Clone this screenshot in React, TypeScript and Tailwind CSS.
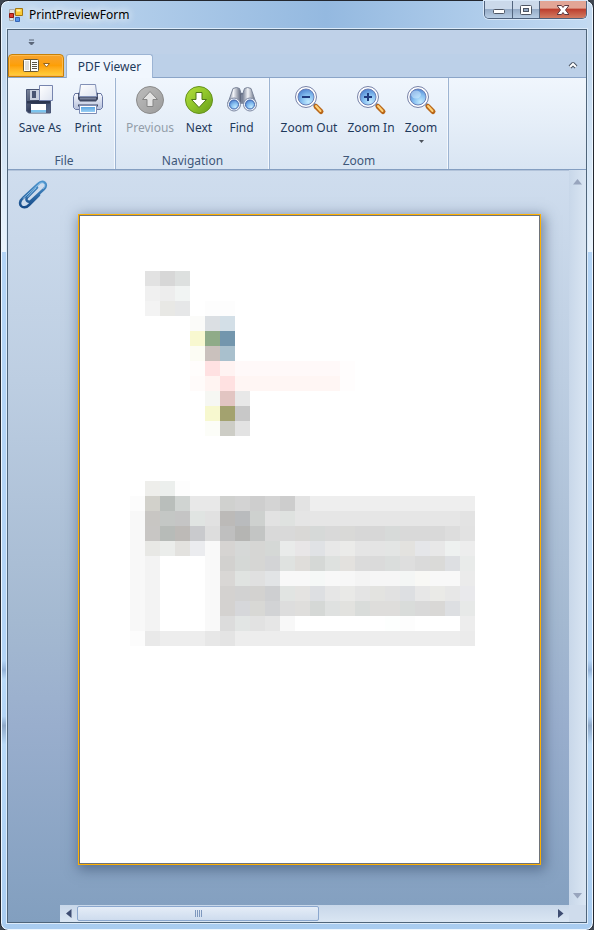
import type { ReactNode } from "react";

type MosaicRow = { row: number; col: number; colors: string };

// Six-digit hex colours, one per cell; "x3" repeats the colour before it to three cells.
const mosaic: MosaicRow[] = [
  { row: 0, col: 1, colors: "e2e2e2 d7d7d7 dde0df" },
  { row: 1, col: 1, colors: "f0f0f0 ededed f1f4f3" },
  { row: 2, col: 1, colors: "f3f3f3 e8e8e5 e6e7e8 ffffff fdfdfd x2" },
  { row: 3, col: 4, colors: "fbfbf9 dbdfe3 d3dfe7" },
  { row: 4, col: 4, colors: "f8f8d0 8fab88 7396ad" },
  { row: 5, col: 4, colors: "fcfcf4 cac1bd a9c0cd" },
  { row: 6, col: 4, colors: "fffdfc ffe1e2 fff3f2 fff9f9 x7 fffdfd" },
  { row: 7, col: 4, colors: "fffbfa fff4f2 ffe1e1 fff6f4 x7 fffdfd" },
  { row: 8, col: 5, colors: "f6f7f3 e2c5c2 e8e8e8" },
  { row: 9, col: 5, colors: "f7f8cf a3a26f c8c8c8" },
  { row: 10, col: 5, colors: "fcfdf8 cdcdc6 e3e3e3" },
  { row: 14, col: 1, colors: "eeeeeb ecefed fdfdfd" },
  { row: 15, col: 0, colors: "fcfcfc d2d1cb b9bebb d0d4d2 e8e8e8 x2 d0d1cf d3d3d3 cecece d4d4d4 cdcdcd e3e3e3 eeeeee x11" },
  { row: 16, col: 0, colors: "f8f8f8 c8c6c3 c4c7c5 c5c5c5 e0e4e2 e1e1e1 bcbab8 b9bbbd ced1cf e2e2e2 dfe2e0 e5e5e5 e6e6e6 x10 e3e3e3" },
  { row: 17, col: 0, colors: "f8f8f8 c8c6c4 b7bbb8 bdbab7 c9cacd dddddd bfbfbf b5b5b3 c3c5c4 d9d9d9 x2 d9d8d6 d6d9d8 d9d9d9 d9d9d7 d7d7d7 x2 d7dad9 d9d9d9 x3 dddddd e2e2e2" },
  { row: 18, col: 0, colors: "f8f8f8 e8e8e5 ebedeb e3e2df ebecef f9f9f9 d6d4d2 d6d8d7 d6d6d4 d5d8d6 e9ebea e8e6e7 e0e2e5 e8e8e8 ebebe9 e5e5e5 e4e4e4 e3e5e4 e3e2df e5e6e9 e8e8e8 eef1f0 ededed" },
  { row: 19, col: 0, colors: "f8f8f8 f3f3f3 ffffff x3 f9f9f9 d2d1cf d5d8d6 d6d6d4 d3d4d6 dfe2e0 dfddda d5d8d6 dee1df e3e1de dbdbdb dadada dadddc dedede dadada dadad8 dddfe2 e9ebea" },
  { row: 20, col: 0, colors: "f8f8f8 f3f3f3 ffffff x3 f9f9f9 d9d7d5 e0e3e1 e0e0e0 e2e4e6 f8f8f8 x2 f5f8f7 f8f8f8 f7f7f7 f4f4f4 f6f6f6 x2 f4f6f5 f8f8f5 f8f8f8 x2 ebebeb" },
  { row: 21, col: 0, colors: "f8f8f8 f3f3f3 ffffff x3 f9f9f9 d4d2d0 d2d2d2 d3d2d0 cecfd1 e1e4e2 e4e3e1 dddfe2 e6e6e6 e9e9e7 e4e4e4 e3e3e0 e1e1e1 dddfe2 e7e7e7 eaeae7 e7e7e7 e9e9ec" },
  { row: 22, col: 0, colors: "f8f8f8 f3f3f3 ffffff x3 f9f9f9 d4d2d0 d6d7da d8d8d5 d2d3d5 dddddd dfdedc d5d8d6 dfe1e0 e2e2df d9dcda dedddb x2 d9dcda d9d9d9 d9d8d6 dddfe2 e7e9e8" },
  { row: 23, col: 0, colors: "f8f8f8 f3f3f3 ffffff x3 f9f9f9 dcdcdc e2e5e4 e2e2e2 e6e6e6 f8f8f8 ffffff x6 fdfffe fdfdfd ffffff x3 ededed" },
  { row: 24, col: 0, colors: "fcfcfc e9e9e9 ededed x3 e7e7e7 e4e4e4 ededed x15 ebebeb" },
];

function expand(colors: string): string[] {
  const cells: string[] = [];
  for (const token of colors.split(" ")) {
    if (token[0] === "x") {
      const last = cells[cells.length - 1];
      for (let i = 1; i < Number(token.slice(1)); i++) cells.push(last);
    } else {
      cells.push("#" + token);
    }
  }
  return cells;
}

function PagePreview() {
  return (
    <svg viewBox="0 0 459 647" className="block w-full bg-white" shapeRendering="crispEdges" role="img" aria-label="Page">
      {mosaic.map(({ row, col, colors }) =>
        expand(colors).map((fill, i) => (
          <rect key={`${row}-${i}`} x={50 + (col + i) * 15} y={55 + row * 15} width="15" height="15" fill={fill} />
        )),
      )}
    </svg>
  );
}

function Defs() {
  return (
    <svg width="0" height="0" className="absolute" aria-hidden="true">
      <defs>
        <linearGradient id="navy" x1="0" y1="0" x2="1" y2="1">
          <stop offset="0" stopColor="#7d879d" />
          <stop offset="0.5" stopColor="#343f5d" />
          <stop offset="1" stopColor="#566688" />
        </linearGradient>
        <linearGradient id="paper" x1="0" y1="0" x2="1" y2="1">
          <stop offset="0" stopColor="#ffffff" />
          <stop offset="1" stopColor="#dde3f0" />
        </linearGradient>
        <linearGradient id="sky" x1="0" y1="0" x2="0" y2="1">
          <stop offset="0" stopColor="#5ba5e0" />
          <stop offset="1" stopColor="#9bd0f5" />
        </linearGradient>
        <linearGradient id="body" x1="0" y1="0" x2="0" y2="1">
          <stop offset="0" stopColor="#f8faff" />
          <stop offset="1" stopColor="#b4bfda" />
        </linearGradient>
        <linearGradient id="green" x1="0" y1="0" x2="1" y2="1">
          <stop offset="0" stopColor="#b4de3c" />
          <stop offset="0.5" stopColor="#8fc52a" />
          <stop offset="1" stopColor="#689c1b" />
        </linearGradient>
        <linearGradient id="grey" x1="0" y1="0" x2="1" y2="1">
          <stop offset="0" stopColor="#bdbdbd" />
          <stop offset="1" stopColor="#9b9b9b" />
        </linearGradient>
        <radialGradient id="lens" cx="0.65" cy="0.8" r="0.85">
          <stop offset="0" stopColor="#c3ebff" />
          <stop offset="0.5" stopColor="#86bff0" />
          <stop offset="1" stopColor="#4c80cf" />
        </radialGradient>
        <linearGradient id="tube" x1="0" y1="0" x2="1" y2="0">
          <stop offset="0" stopColor="#727c91" />
          <stop offset="0.4" stopColor="#f2f4f8" />
          <stop offset="1" stopColor="#4d576e" />
        </linearGradient>
        <linearGradient id="clip" x1="0" y1="0" x2="0" y2="1">
          <stop offset="0" stopColor="#4d94cd" />
          <stop offset="1" stopColor="#164a88" />
        </linearGradient>
      </defs>
    </svg>
  );
}

function Icon({ children }: { children: ReactNode }) {
  return (
    <svg width="32" height="32" viewBox="0 0 32 32" className="shrink-0" aria-hidden="true">
      {children}
    </svg>
  );
}

function SaveIcon() {
  return (
    <Icon>
      <path d="M2.500 5.500h24v23.500h-22l-2-2z" fill="url(#navy)" stroke="#4a5675" />
      <path d="M6 6h11v10H6z" fill="#c9d0df" />
      <path d="M8 7h4v7H8z" fill="#4a5573" />
      <path d="M3 17h23v2.500H3z" fill="#2c3650" />
      <path d="M7 20h15v8.500H7z" fill="#fff" />
      <path d="M7 26h15v2.500H7z" fill="#7cc4ee" />
      <path d="M15.500 1.500h13v15h-13z" fill="url(#paper)" stroke="#7785af" />
    </Icon>
  );
}

function PrintIcon() {
  return (
    <Icon>
      <path d="M3 9.500h4v6h18v-6h4l1.500 3v11l-2 2h-25l-2-2v-11z" fill="url(#body)" stroke="#6a78a4" />
      <path d="M6 9l2-1h16l2 1v6l-2 2.500H8L6 15z" fill="#3f4863" />
      <path d="M8 14.500h16" stroke="#78819a" strokeWidth="2" />
      <path d="M8.500.500h15l1.500 12H7z" fill="url(#paper)" stroke="#8290b6" />
      <path d="M6 21.500h20" stroke="#3f4967" strokeWidth="2" />
      <path d="M7.500 21.500h17v8h-17z" fill="#fff" stroke="#7d8cb4" />
      <path d="M9 23h14v5H9z" fill="url(#sky)" />
    </Icon>
  );
}

function PreviousIcon() {
  return (
    <Icon>
      <circle cx="16" cy="16" r="13.500" fill="url(#grey)" stroke="#8b8b8b" />
      <path d="M16 7.500l7.500 8H19v7h-6v-7H8.500z" fill="#e3e3e3" stroke="#858585" strokeLinejoin="round" />
    </Icon>
  );
}

function NextIcon() {
  return (
    <Icon>
      <circle cx="16" cy="16" r="13.500" fill="url(#green)" stroke="#64911c" />
      <path d="M16 23.500l-7.500-8H13v-7h6v7h4.500z" fill="#fff" stroke="#4e7519" strokeLinejoin="round" />
    </Icon>
  );
}

function FindIcon() {
  return (
    <Icon>
      <path d="M12 9h8v9h-8z" fill="#4b556b" />
      <path d="M7 4.500q3.500-2 6.500 0l2 6v9L2 19z" fill="url(#tube)" stroke="#7a8499" />
      <path d="M25 4.500q-3.500-2-6.500 0l-2 6v9L30 19z" fill="url(#tube)" stroke="#7a8499" />
      <circle cx="8" cy="20.500" r="6.500" fill="#e9eef7" stroke="#7e89a3" />
      <circle cx="24" cy="20.500" r="6.500" fill="#e9eef7" stroke="#7e89a3" />
      <circle cx="8" cy="20.500" r="4.500" fill="url(#lens)" stroke="#3f66ac" />
      <circle cx="24" cy="20.500" r="4.500" fill="url(#lens)" stroke="#3f66ac" />
    </Icon>
  );
}

function ZoomIcon({ sign }: { sign?: "in" | "out" }) {
  return (
    <Icon>
      <path d="M20 19l3.500 4" stroke="#7d879d" strokeWidth="3" />
      <path d="M23 22.500l5 5" stroke="#b96618" strokeWidth="5" strokeLinecap="round" />
      <path d="M23 22l4.500 5" stroke="#ffd279" strokeWidth="2" strokeLinecap="round" />
      <circle cx="13" cy="13" r="10.500" fill="#fff" stroke="#7882a8" />
      <circle cx="13" cy="13" r="8" fill="url(#lens)" stroke="#6a80b8" />
      {!sign && <ellipse cx="11" cy="10.500" rx="5" ry="4" fill="#d9f0ff" opacity="0.5" />}
      {sign && <path d="M9 13h8" stroke="#203a7e" strokeWidth="2" />}
      {sign === "in" && <path d="M13 9v8" stroke="#203a7e" strokeWidth="2" />}
    </Icon>
  );
}

function Tool({ label, icon, width, disabled, menu }: { label: string; icon: ReactNode; width: string; disabled?: boolean; menu?: boolean }) {
  return (
    <button type="button" disabled={disabled} className={`flex flex-col items-center whitespace-nowrap text-[#1e395b] disabled:text-[#939da9] ${width}`}>
      {icon}
      <span className="mt-1 leading-4">{label}</span>
      {menu && (
        <svg width="5" height="3" viewBox="0 0 5 3" className="mt-1" aria-hidden="true">
          <path d="M0 0h5L2.500 3z" fill="#4c535c" />
        </svg>
      )}
    </button>
  );
}

function Group({ name, padding, children }: { name: string; padding: string; children: ReactNode }) {
  return (
    <section className={`flex flex-col justify-between border-r border-[#9db4d2] pt-1.5 shadow-[inset_-1px_0_#f4f8fd] ${padding}`} aria-label={name}>
      <div className="flex items-start">{children}</div>
      <h2 className="text-center leading-4 text-[#3e5779]">{name}</h2>
    </section>
  );
}

function Ribbon() {
  return (
    <header>
      <div className="flex h-6 items-center bg-[#bfd1e8] pl-5">
        <button type="button" aria-label="Customize toolbar">
          <svg width="7" height="7" viewBox="0 0 7 7" aria-hidden="true">
            <path d="M1 1h5M1 3.500h5L3.500 6z" stroke="#5a6678" fill="#5a6678" />
          </svg>
        </button>
      </div>
      <div className="flex h-6 items-end border-b border-[#8ba5c8] bg-[#bcd0e8]">
        <button type="button" aria-label="File menu" className="flex h-[23px] w-14 items-center justify-center gap-1 rounded-t-sm border border-[#c78006] bg-linear-to-b from-[#f6a32b] via-[#fd9f05] to-[#ffd23d] shadow-[inset_0_0_0_1px_#ffba4c]">
          <svg width="16" height="13" viewBox="0 0 16 13" aria-hidden="true">
            <rect x="0.500" y="0.500" width="15" height="12" rx="1" fill="#fff" stroke="#6b5a35" />
            <path d="M7.500 1v11" stroke="#6b5a35" />
            <path d="M2 2h4v9H2z" fill="#dedede" />
            <path d="M9 3.500h5M9 5.500h5M9 7.500h5M9 9.500h5" stroke="#5b5447" />
          </svg>
          <svg width="7" height="5" viewBox="0 0 7 5" aria-hidden="true">
            <path d="M.500.500h6L3.500 4z" fill="#fff" stroke="#95631b" />
          </svg>
        </button>
        <button type="button" className="-mb-px ml-0.5 h-6 w-[87px] rounded-t-[3px] border border-b-0 border-[#9cb4d4] bg-[#f1f7fe] leading-4 text-[#1e395b]">
          PDF Viewer
        </button>
        <button type="button" aria-label="Collapse ribbon" className="mr-2 mb-2 ml-auto">
          <svg width="10" height="8" viewBox="0 0 10 8" aria-hidden="true">
            <path d="M2 6L5 3l3 3" fill="none" stroke="#454f5e" strokeWidth="4" strokeLinejoin="round" />
            <path d="M2 6l3-3 3 3" fill="none" stroke="#fff" strokeWidth="2" />
          </svg>
        </button>
      </div>
      <div className="flex h-23 border-b border-[#849ec1] bg-linear-to-b from-[#f0f6fd] via-[#e5eef8] to-[#d9e5f3]">
        <Group name="File" padding="pl-2 pr-[3px]">
          <Tool label="Save As" icon={<SaveIcon />} width="w-12" />
          <Tool label="Print" icon={<PrintIcon />} width="w-12" />
        </Group>
        <Group name="Navigation" padding="px-1.5">
          <Tool label="Previous" icon={<PreviousIcon />} width="w-14" disabled />
          <Tool label="Next" icon={<NextIcon />} width="w-[42px]" />
          <Tool label="Find" icon={<FindIcon />} width="w-[43px]" />
        </Group>
        <Group name="Zoom" padding="px-1.5">
          <Tool label="Zoom Out" icon={<ZoomIcon sign="out" />} width="w-[66px]" />
          <Tool label="Zoom In" icon={<ZoomIcon sign="in" />} width="w-[58px]" />
          <Tool label="Zoom" icon={<ZoomIcon />} width="w-[42px]" menu />
        </Group>
      </div>
    </header>
  );
}

function TitleBar() {
  return (
    <div className="flex h-[27px] items-start justify-between bg-linear-to-r from-[#c4daf0] via-[#94b9e0] via-55% to-[#c2daf2] bg-clip-content pr-px pl-[3px]">
      <div className="flex items-center gap-1.5 pt-[5px]">
        <svg width="14" height="14" viewBox="0 0 14 14" aria-hidden="true">
          <path d="M.500 1.500h5v5h-5zM.500 8.500h4v4h-4z" fill="#e3e3e3" stroke="#aaa" />
          <path d="M6.500.500h7v7h-7z" fill="#f9ca35" stroke="#a47610" />
          <path d="M7.500 1.500h4v2h-4z" fill="#fff0a8" />
          <path d="M.500 5.500h4v4h-4z" fill="#dc3b31" stroke="#8a1610" />
          <path d="M6.500 9.500h4v4h-4z" fill="#5794e8" stroke="#3565b7" />
        </svg>
        <h1 className="leading-[17px] text-black [text-shadow:0_0_8px_#fff,0_0_8px_#fff]">PrintPreviewForm</h1>
      </div>
      <div className="flex h-[18px] overflow-hidden rounded-b-[5px] border border-t-0 border-[#4f627d] shadow-[0_0_0_1px_#d9e8f8]">
        <button type="button" aria-label="Minimize" className="flex w-7 items-center justify-center border-r border-[#53657e] bg-linear-to-b from-[#cbd9ea] from-45% via-[#96acc7] via-50% to-[#b8cde4]">
          <svg width="12" height="6" viewBox="0 0 12 6" className="mt-1" aria-hidden="true">
            <rect x="0.500" y="0.500" width="11" height="4" rx="1" fill="#fff" stroke="#4e5664" />
          </svg>
        </button>
        <button type="button" aria-label="Maximize" className="flex w-[27px] items-center justify-center border-r border-[#53657e] bg-linear-to-b from-[#cbd9ea] from-45% via-[#96acc7] via-50% to-[#b8cde4]">
          <svg width="12" height="10" viewBox="0 0 12 10" aria-hidden="true">
            <rect x="0.500" y="0.500" width="11" height="9" rx="1" fill="#fff" stroke="#4e5664" />
            <rect x="3.500" y="3.500" width="5" height="3" fill="#91a7c2" stroke="#4e5664" />
          </svg>
        </button>
        <button type="button" aria-label="Close" className="flex w-[46px] items-center justify-center bg-linear-to-b from-[#e2a596] from-40% via-[#bd4030] via-50% to-[#d27b62]">
          <svg width="12" height="10" viewBox="0 0 12 10" aria-hidden="true">
            <path d="M0 .500h4.500L6 2.500 7.500.500H12L8.500 5 12 9.500H7.500L6 7.500l-1.500 2H0L3.500 5z" fill="#fff" stroke="#5e3940" />
          </svg>
        </button>
      </div>
    </div>
  );
}

function Paperclip() {
  return (
    <svg width="32" height="32" viewBox="0 0 32 32" fill="none" aria-hidden="true">
      <g strokeLinecap="round" strokeLinejoin="round">
        <path d="M19 8.500L9.500 18c-3 3 1 6.500 4 3.500L26 10c5-5-1-10-6-5L5 19c-7 6 0 13 6 7l10-10" stroke="url(#clip)" strokeWidth="2.500" />
        <path d="M18 9l-8.500 9M25.500 9.500c4-4-1-8-5-4L5 19.500" stroke="#a2d1f1" strokeWidth="0.800" />
      </g>
    </svg>
  );
}

function Viewer() {
  return (
    <main className="flex flex-1 bg-[linear-gradient(#cfddee,#bdcee2_28%,#a4b9d1_60%,#99aecd_74%,#829fbf)] shadow-[inset_0_1px_#b2c3da]">
      <aside className="w-[52px] shrink-0 pt-[9px] pl-2.5">
        <button type="button" aria-label="Attachments">
          <Paperclip />
        </button>
      </aside>
      <div className="flex min-w-0 flex-1 flex-col">
        <div className="flex flex-1">
          <div className="min-w-0 flex-1 pt-11 pr-7 pb-10 pl-[18px]">
            <div className="border border-[#ffb000] shadow-[2px_3px_12px_2px_#29405f80]">
              <div className="border border-[#6e7379]">
                <PagePreview />
              </div>
            </div>
          </div>
          <div className="flex w-[17px] flex-col items-center justify-between bg-linear-to-r from-[#c8d7e9] to-[#dae6f3] pt-[9px] pb-1.5">
            <button type="button" disabled aria-label="Scroll up">
              <svg width="9" height="6" viewBox="0 0 9 6" className="block" aria-hidden="true">
                <path d="M0 5.500L4.500 0 9 5.500z" fill="#98a5bd" />
              </svg>
            </button>
            <button type="button" disabled aria-label="Scroll down">
              <svg width="9" height="6" viewBox="0 0 9 6" className="block" aria-hidden="true">
                <path d="M0 0h9L4.500 5.500z" fill="#98a5bd" />
              </svg>
            </button>
          </div>
        </div>
        <div className="flex h-[17px]">
          <div className="flex flex-1 items-center bg-linear-to-b from-[#c8d7e9] to-[#dae6f3]">
            <button type="button" aria-label="Scroll left" className="flex w-[17px] justify-center">
              <svg width="6" height="9" viewBox="0 0 6 9" aria-hidden="true">
                <path d="M5.500 0v9L0 4.500z" fill="#3e4d72" />
              </svg>
            </button>
            <div className="flex flex-1">
              <button type="button" aria-label="Horizontal scroll thumb" className="flex h-[15px] w-[51%] items-center justify-center gap-px rounded-xs border border-[#8ba7ce] bg-linear-to-b from-[#e5edf7] to-[#cedcee]">
                <span className="h-[7px] w-px bg-[#7e98be]" />
                <span className="h-[7px] w-px bg-[#7e98be]" />
                <span className="h-[7px] w-px bg-[#7e98be]" />
                <span className="h-[7px] w-px bg-[#7e98be]" />
              </button>
            </div>
            <button type="button" aria-label="Scroll right" className="flex w-[17px] justify-center">
              <svg width="6" height="9" viewBox="0 0 6 9" aria-hidden="true">
                <path d="M0 0v9l5.500-4.500z" fill="#3e4d72" />
              </svg>
            </button>
          </div>
          <div className="w-[17px] bg-[#cfdcec]" />
        </div>
      </div>
    </main>
  );
}

export default function App() {
  return (
    <div className="min-h-screen bg-[#3f4651] font-['Noto_Sans',sans-serif] text-xs">
      <Defs />
      <div className="flex min-h-screen flex-col rounded-lg border border-[#23272f] bg-[linear-gradient(#c4daf0,#c4daf0_8%,#eaf4fd_27%,#b3d4f6_27%,#b3d4f6_71%,#93b2d8_72%,#b9daf9_73%,#b3d4f6_77%,#8ea8c8_78%,#b9daf9_80%,#a9ccf0)] px-[5px] pb-[6px] shadow-[inset_0_0_0_1px_#edf6ff]">
        <TitleBar />
        <div className="flex flex-1 flex-col border border-[#dcebfa]">
          <div className="flex flex-1 flex-col border border-[#4f657a]">
            <Ribbon />
            <Viewer />
          </div>
        </div>
      </div>
    </div>
  );
}
